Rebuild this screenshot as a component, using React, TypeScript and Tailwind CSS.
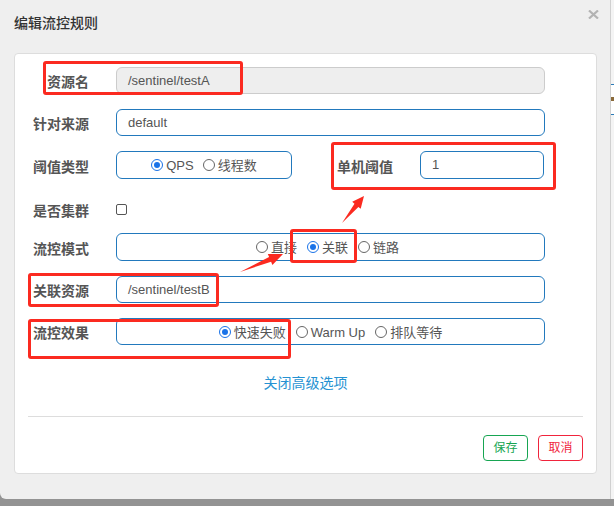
import React from "react";

type Pt = [number, number];

function arrowPoints(tail: Pt, tip: Pt, headLen: number, headW: number, shaftW: number) {
  const dx = tip[0] - tail[0];
  const dy = tip[1] - tail[1];
  const len = Math.hypot(dx, dy);
  const ux = dx / len;
  const uy = dy / len;
  const nx = -uy;
  const ny = ux;
  const bx = tip[0] - ux * headLen;
  const by = tip[1] - uy * headLen;
  const pts: Pt[] = [
    tail,
    [bx + (nx * shaftW) / 2, by + (ny * shaftW) / 2],
    [bx + (nx * headW) / 2, by + (ny * headW) / 2],
    tip,
    [bx - (nx * headW) / 2, by - (ny * headW) / 2],
    [bx - (nx * shaftW) / 2, by - (ny * shaftW) / 2],
  ];
  return pts.map((p) => `${p[0].toFixed(1)},${p[1].toFixed(1)}`).join(" ");
}

function Radio({ label, checked }: { label: string; checked?: boolean }) {
  return (
    <span className="flex items-center gap-[3px]">
      {checked ? (
        <span className="flex h-[12px] w-[12px] items-center justify-center rounded-full border-[1.5px] border-[#1a73e8] bg-white">
          <span className="h-[6px] w-[6px] rounded-full bg-[#1a73e8]" />
        </span>
      ) : (
        <span className="h-[12px] w-[12px] rounded-full border border-[#666] bg-white" />
      )}
      <span className="relative top-[1px]">{label}</span>
    </span>
  );
}

function Label({ children }: { children: React.ReactNode }) {
  return (
    <div className="relative top-[2px] w-[74px] shrink-0 text-right text-[14px] font-bold text-[#555]">
      {children}
    </div>
  );
}

function TextBox({ value, disabled }: { value: string; disabled?: boolean }) {
  return (
    <div
      className={
        disabled
          ? "flex h-full w-[429px] items-center rounded-[6px] border border-[#ccc] bg-[#eee] pl-[11px] text-[13px] text-[#555]"
          : "flex h-full w-[429px] items-center rounded-[6px] border border-[#2279bd] bg-white pl-[11px] text-[13px] text-[#555]"
      }
    >
      {value}
    </div>
  );
}

function RedBox({ className }: { className: string }) {
  return <div className={"absolute rounded-[3px] border-[3px] border-[#fb2a20] " + className} />;
}

export default function App() {
  return (
    <div className="relative h-[506px] w-[614px] overflow-hidden bg-[#939393] font-['Liberation_Sans','Noto_Sans_CJK_SC',sans-serif]">
      <div className="flex h-[499px]">
        <div className="relative w-[611px] rounded-bl-[6px] border-r border-[#d0d0d0] bg-[#efefef] px-[14px] pt-[13px]">
          <div className="h-[20px] text-[14px] leading-[20px] font-medium text-[#333]">编辑流控规则</div>
          <svg className="absolute right-[11px] top-[10px]" width="11" height="9" viewBox="0 0 11 9">
            <path d="M1 0.5 L10 8.5 M10 0.5 L1 8.5" stroke="#b3b3b3" strokeWidth="2.2" />
          </svg>

          <div className="mt-[20px] w-[583px] rounded-[4px] border border-[#ddd] bg-white pt-[13px] pb-[12px]">
            <div className="flex h-[27px] items-center gap-[27px]">
              <Label>资源名</Label>
              <TextBox value="/sentinel/testA" disabled />
            </div>
            <div className="mt-[15px] flex h-[27px] items-center gap-[27px]">
              <Label>针对来源</Label>
              <TextBox value="default" />
            </div>
            <div className="mt-[15px] flex h-[28px] items-center gap-[27px]">
              <Label>阈值类型</Label>
              <div className="flex h-full w-[176px] items-center justify-center gap-[9px] rounded-[6px] border border-[#2279bd] text-[13px] text-[#555]">
                <Radio label="QPS" checked />
                <Radio label="线程数" />
              </div>
              <Label>单机阈值</Label>
              <div className="flex h-full w-[124px] items-center rounded-[6px] border border-[#2279bd] pl-[11px] text-[13px] text-[#555]">
                1
              </div>
            </div>
            <div className="mt-[17px] flex h-[27px] items-center gap-[27px]">
              <Label>是否集群</Label>
              <span className="h-[11px] w-[11px] rounded-[2px] border border-[#555] bg-white" />
            </div>
            <div className="mt-[10px] flex h-[28px] items-center gap-[27px]">
              <Label>流控模式</Label>
              <div className="flex h-full w-[429px] items-center justify-center gap-[10px] rounded-[6px] border border-[#2279bd] pr-[6px] text-[13px] text-[#555]">
                <Radio label="直接" />
                <Radio label="关联" checked />
                <Radio label="链路" />
              </div>
            </div>
            <div className="mt-[15px] flex h-[27px] items-center gap-[27px]">
              <Label>关联资源</Label>
              <TextBox value="/sentinel/testB" />
            </div>
            <div className="mt-[15px] flex h-[27px] items-center gap-[27px]">
              <Label>流控效果</Label>
              <div className="flex h-full w-[429px] items-center justify-center gap-[10px] rounded-[6px] border border-[#2279bd] text-[13px] text-[#555]">
                <Radio label="快速失败" checked />
                <Radio label="Warm Up" />
                <Radio label="排队等待" />
              </div>
            </div>
            <div className="mt-[28px] text-center text-[14px] leading-[20px] text-[#2592d2]">关闭高级选项</div>
            <div className="mx-[13px] mt-[23px] h-px bg-[#ddd]" />
            <div className="mt-[18px] flex justify-end gap-[10px] pr-[13px]">
              <button className="h-[26px] w-[45px] rounded-[4px] border border-[#17a552] bg-white text-[12px] text-[#17a552]">
                保存
              </button>
              <button className="h-[26px] w-[45px] rounded-[4px] border border-[#f0243c] bg-white text-[12px] text-[#f0243c]">
                取消
              </button>
            </div>
          </div>
        </div>
        <div className="flex w-[3px] flex-col bg-[#f4f4f4]">
          <div className="h-[84px]" />
          <div className="h-px bg-[#2a7ab8]" />
          <div className="h-[12px] bg-white" />
          <div className="h-[4px] bg-[#8a6a3a]" />
          <div className="h-[13px] bg-white" />
          <div className="h-px bg-[#2a7ab8]" />
        </div>
      </div>

      <RedBox className="left-[43px] top-[61px] h-[34px] w-[200px]" />
      <RedBox className="left-[331px] top-[142px] h-[48px] w-[225px]" />
      <RedBox className="left-[290px] top-[229px] h-[34px] w-[67px]" />
      <RedBox className="left-[28px] top-[273px] h-[34px] w-[191px]" />
      <RedBox className="left-[28px] top-[319px] h-[40px] w-[263px]" />

      <svg className="pointer-events-none absolute left-0 top-0" width="614" height="506">
        <polygon points={arrowPoints([342, 223], [364, 196], 12, 11, 5)} fill="#fb2a20" />
        <polygon points={arrowPoints([240, 272], [283, 254], 14, 12, 5)} fill="#fb2a20" />
      </svg>
    </div>
  );
}
